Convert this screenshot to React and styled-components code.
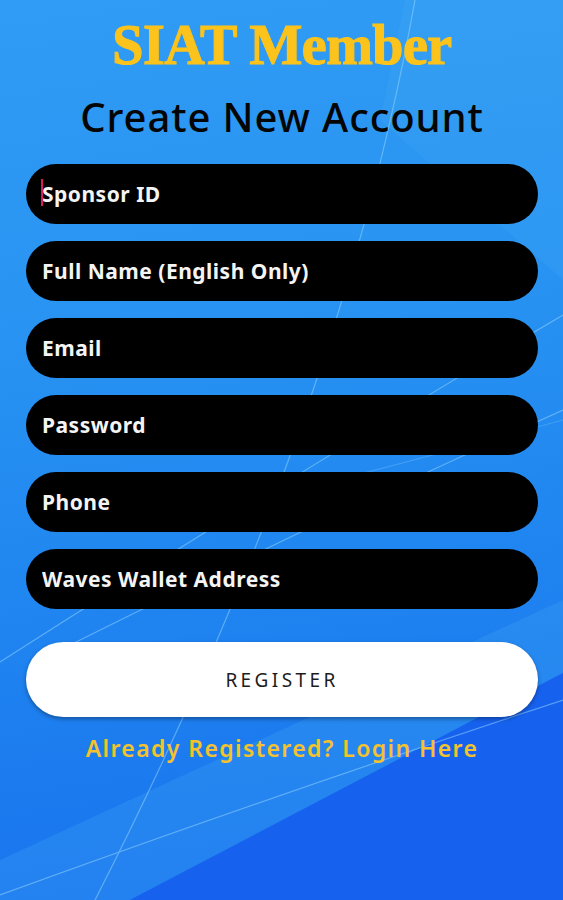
import React from 'react';
import styled, { createGlobalStyle } from 'styled-components';

const GlobalStyle = createGlobalStyle`
  html, body {
    margin: 0;
    padding: 0;
  }

  body {
    font-family: 'Noto Sans', 'Open Sans', sans-serif;
    background: #1a73ef;
  }
`;

const Screen = styled.div`
  position: relative;
  width: 563px;
  min-height: 900px;
  overflow: hidden;
  background: linear-gradient(172deg, #319cf4 0%, #2893f2 35%, #1f84f0 65%, #1870ee 100%);
`;

const Backdrop = styled.svg`
  position: absolute;
  inset: 0;
  width: 100%;
  height: 100%;
  pointer-events: none;
`;

const Content = styled.div`
  position: relative;
  display: flex;
  flex-direction: column;
  align-items: stretch;
  padding: 15px 25px 0 26px;
`;

const Brand = styled.h1`
  margin: 0;
  text-align: center;
  font-family: 'Liberation Serif', 'DejaVu Serif', serif;
  font-weight: 700;
  font-size: 56px;
  line-height: 60px;
  letter-spacing: -0.5px;
  color: #fbc31b;
  -webkit-text-stroke: 1.2px #fbc31b;
`;

const Heading = styled.h2`
  margin: 19px 0 0;
  text-align: center;
  font-family: 'Noto Sans', sans-serif;
  font-weight: 500;
  font-size: 40px;
  line-height: 46px;
  letter-spacing: 0.9px;
  color: #050505;
`;

const Form = styled.form`
  display: flex;
  flex-direction: column;
  gap: 17px;
  margin-top: 24px;
`;

const Field = styled.label`
  position: relative;
  display: flex;
  align-items: center;
  height: 60px;
  padding: 0 16px;
  border-radius: 30px;
  background: #000;
`;

const Caret = styled.span`
  position: absolute;
  left: 15px;
  top: 15px;
  width: 2px;
  height: 27px;
  background: #d81b60;
`;

const Input = styled.input`
  flex: 1;
  min-width: 0;
  border: 0;
  outline: 0;
  padding: 0;
  background: transparent;
  font-family: 'Noto Sans', sans-serif;
  font-weight: 700;
  font-size: 21px;
  letter-spacing: 0.5px;
  color: #fff;

  &::placeholder {
    color: #f4f4f4;
    opacity: 1;
  }
`;

const RegisterButton = styled.button.attrs({
  type: 'button',
})`
  height: 75px;
  margin-top: 16px;
  border: 0;
  border-radius: 38px;
  background: #fff;
  box-shadow: 0 2px 4px rgba(0, 0, 0, 0.35);
  font-family: 'Noto Sans', sans-serif;
  font-size: 19px;
  letter-spacing: 3.4px;
  color: #1d1d1d;
  cursor: pointer;
`;

const LoginLink = styled.a`
  margin-top: 16px;
  text-align: center;
  font-family: 'Noto Sans', sans-serif;
  font-weight: 600;
  font-size: 23px;
  line-height: 30px;
  letter-spacing: 1.4px;
  color: #f3c22c;
  text-decoration: none;
`;

const fields = [
  { name: 'sponsor', label: 'Sponsor ID', focused: true },
  { name: 'fullname', label: 'Full Name (English Only)' },
  { name: 'email', label: 'Email' },
  { name: 'password', label: 'Password' },
  { name: 'phone', label: 'Phone' },
  { name: 'wallet', label: 'Waves Wallet Address' },
];

function Background() {
  return (
    <Backdrop viewBox="0 0 563 900" preserveAspectRatio="none">
      <path d="M0 900 L0 860 L563 600 L563 673 L130 900 Z" fill="#3a9ef4" opacity="0.35" />
      <path d="M130 900 L563 673 L563 900 Z" fill="#1662ef" />
      <path d="M405 0 L563 0 L563 280 L380 120 Z" fill="#4fb2f7" opacity="0.15" />
      <g fill="none" stroke="#9ad8ff" strokeWidth="1.2" opacity="0.5">
        <path d="M415 0 Q340 420 95 900" />
        <path d="M0 895 Q260 800 563 700" />
        <path d="M0 662 Q300 470 563 315" />
        <path d="M70 645 Q320 520 563 410" />
        <path d="M180 520 Q380 470 563 420" opacity="0.5" />
      </g>
    </Backdrop>
  );
}

export default function App() {
  return (
    <>
      <GlobalStyle />
      <Screen>
        <Background />
        <Content>
          <Brand>SIAT Member</Brand>
          <Heading>Create New Account</Heading>
          <Form>
            {fields.map((field) => (
              <Field key={field.name}>
                {field.focused && <Caret />}
                <Input name={field.name} placeholder={field.label} />
              </Field>
            ))}
            <RegisterButton>REGISTER</RegisterButton>
          </Form>
          <LoginLink href="#login">Already Registered? Login Here</LoginLink>
        </Content>
      </Screen>
    </>
  );
}
